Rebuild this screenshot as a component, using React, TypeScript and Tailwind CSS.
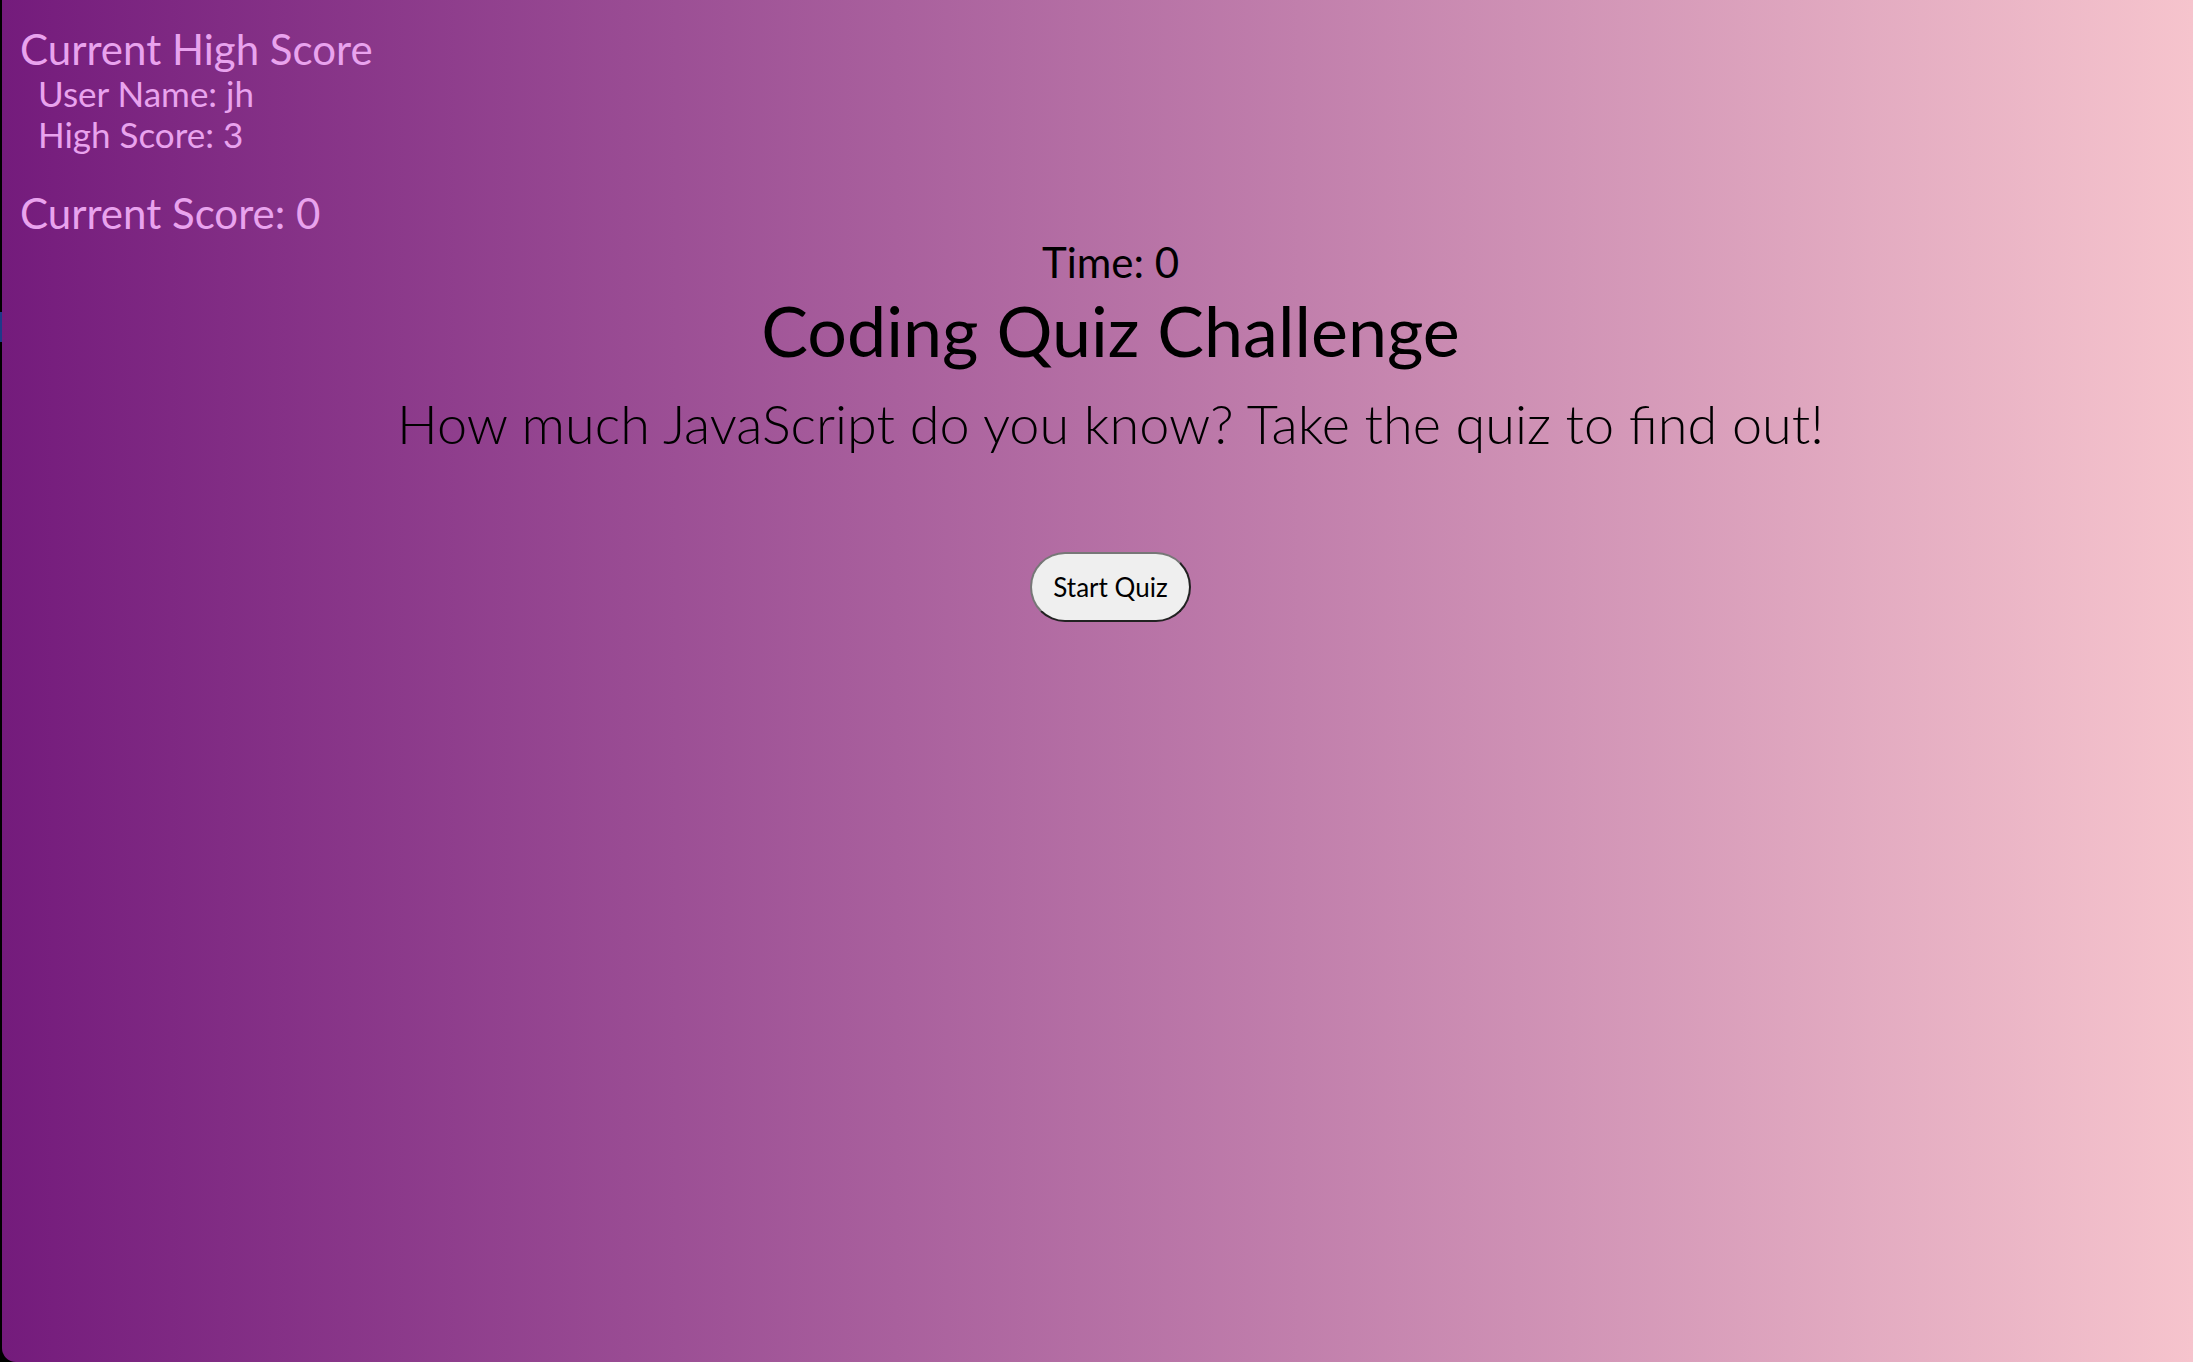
import React from "react";

export default function App() {
  return (
    <div className="flex h-[1362px] w-[2193px] bg-black overflow-hidden">
      <div className="flex w-[2px] shrink-0 flex-col">
        <div className="h-[312px]" />
        <div className="h-[30px] bg-[#1d3a8a]" />
      </div>
      <div
        className="flex flex-1 flex-col rounded-bl-[14px] bg-[linear-gradient(to_right,#741b7c,#f6c4cd)]"
        style={{ fontFamily: "Lato, 'Noto Sans', sans-serif" }}
      >
        <div className="pl-[18px] pt-[25px] text-[#e9a3ee]">
          <div className="text-[42px] leading-[48px]">Current High Score</div>
          <div className="pl-[18px] text-[35px] leading-[41px]">User Name: jh</div>
          <div className="pl-[18px] text-[35px] leading-[41px]">High Score: 3</div>
          <div className="mt-[34px] text-[42px] leading-[48px]">Current Score: 0</div>
        </div>
        <div className="flex flex-col items-center pl-[26px] text-black">
          <div className="text-[42px] leading-[50px]">Time: 0</div>
          <div className="mt-[3px] text-[70px] leading-[80px]">Coding Quiz Challenge</div>
          <div className="mt-[19px] text-[54px] font-light leading-[70px]">
            How much JavaScript do you know? Take the quiz to find out!
          </div>
          <button className="mt-[93px] h-[70px] w-[161px] rounded-full border-2 border-t-[#777] border-l-[#777] border-r-[#222] border-b-[#222] bg-[#efefef] text-[26px] text-black">
            Start Quiz
          </button>
        </div>
      </div>
    </div>
  );
}
